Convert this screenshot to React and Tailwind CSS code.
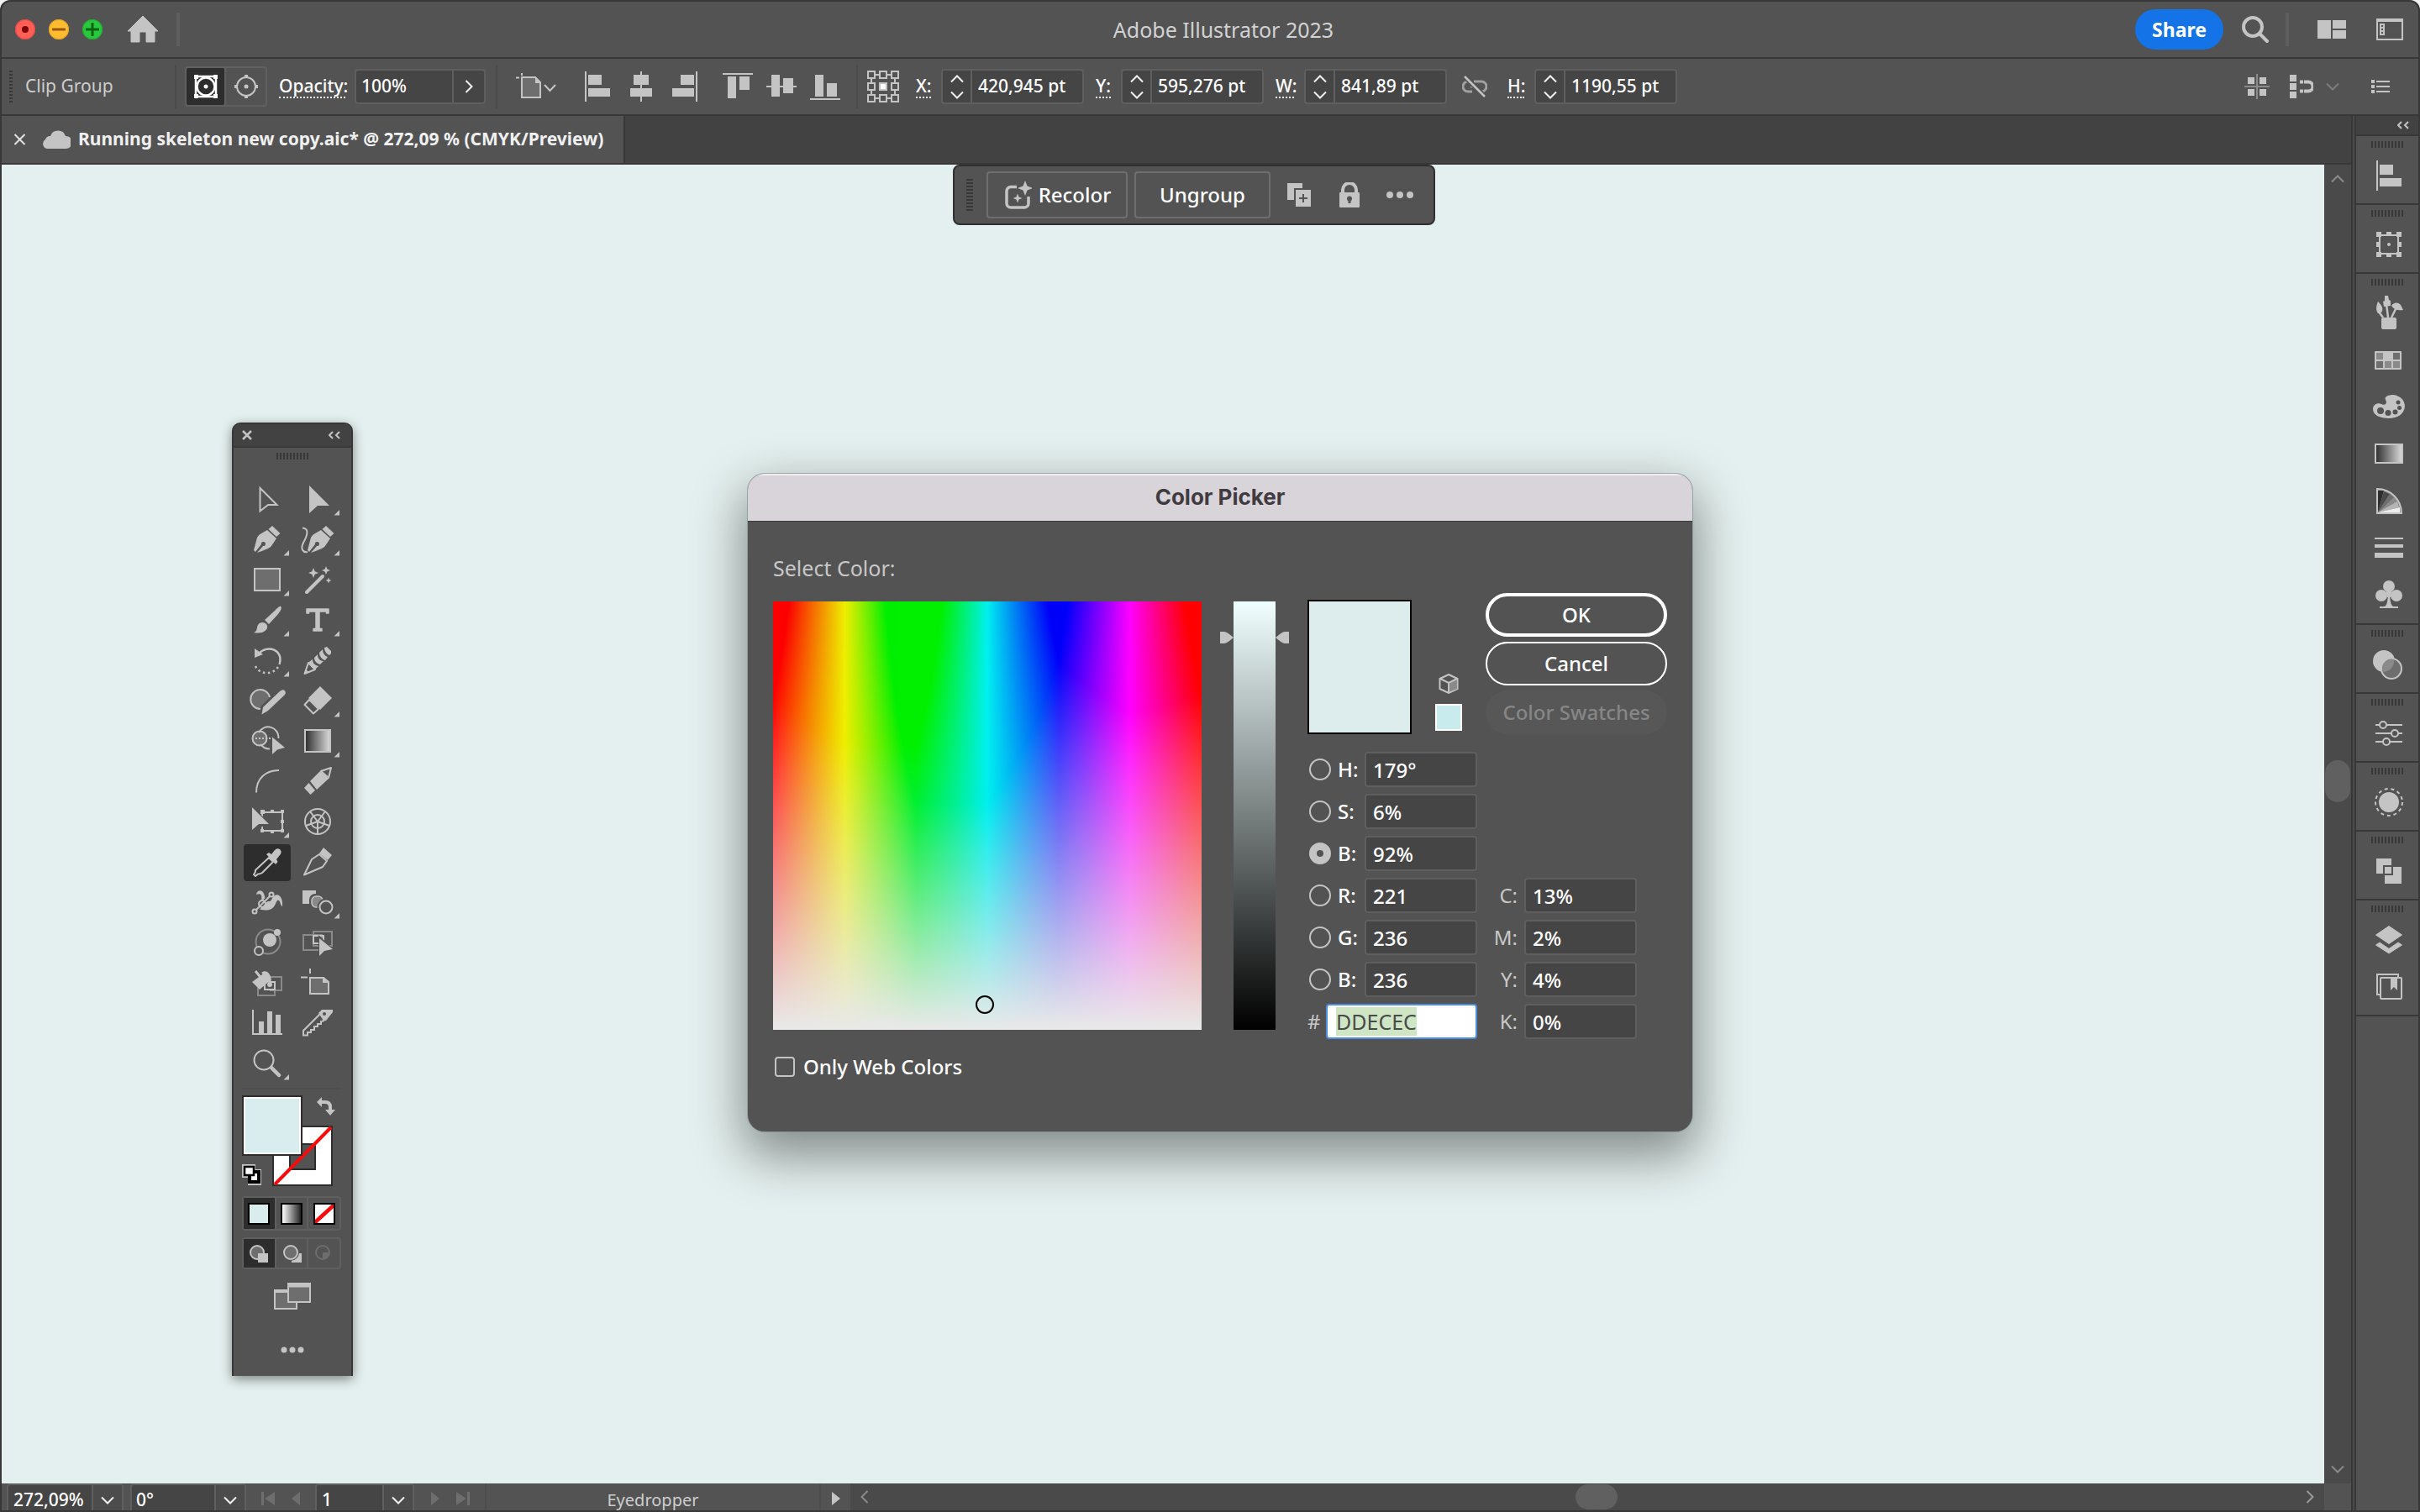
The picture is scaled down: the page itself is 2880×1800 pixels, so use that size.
import React, { useEffect, useRef } from 'react';

const C = '#c4c4c4';
const MID = '#6e6e6e';
const DIM = '#8a8a8a';

/* ---------- small helpers ---------- */

function Svg({ w, h, className = '', children }) {
  return (
    <svg
      width={w}
      height={h}
      viewBox={`${-w / 2} ${-h / 2} ${w} ${h}`}
      fill="none"
      className={`shrink-0 ${className}`}
      aria-hidden="true"
    >
      {children}
    </svg>
  );
}

function Chevron({ dir = 'down', color = '#f0f0f0', size = 6 }) {
  const s = size;
  const t = s - 2;
  const d = {
    down: `M${-s} ${-t / 2 - 1}L0 ${t / 2 + 1}L${s} ${-t / 2 - 1}`,
    up: `M${-s} ${t / 2 + 1}L0 ${-t / 2 - 1}L${s} ${t / 2 + 1}`,
    left: `M${t / 2 + 1} ${-s}L${-t / 2 - 1} 0L${t / 2 + 1} ${s}`,
    right: `M${-t / 2 - 1} ${-s}L${t / 2 + 1} 0L${-t / 2 - 1} ${s}`,
  }[dir];
  return (
    <Svg w={20} h={20}>
      <path d={d} stroke={color} strokeWidth="2" />
    </Svg>
  );
}

function Star({ x, y, r }) {
  const k = r * 0.28;
  return (
    <path
      d={`M${x} ${y - r}L${x + k} ${y - k}L${x + r} ${y}L${x + k} ${y + k}L${x} ${y + r}L${x - k} ${y + k}L${x - r} ${y}L${x - k} ${y - k}Z`}
      fill={C}
    />
  );
}

function GripH() {
  return (
    <svg width="38" height="8" className="shrink-0" aria-hidden="true">
      {[0, 4, 8, 12, 16, 20, 24, 28, 32, 36].map((x) => (
        <rect key={x} x={x} width="2" height="8" fill="#383838" />
      ))}
    </svg>
  );
}

function GripV({ w = 4 }) {
  return (
    <svg width={w} height="38" className="shrink-0" aria-hidden="true">
      {[0, 4, 8, 12, 16, 20, 24, 28, 32, 36].map((y) => (
        <rect key={y} y={y} width={w} height="2" fill="#383838" />
      ))}
    </svg>
  );
}

/* ---------- title bar ---------- */

function TitleBar() {
  return (
    <header className="grid h-[68px] shrink-0 grid-cols-[1fr_auto_1fr] items-center rounded-t-[10px] border-b-2 border-[#383838] bg-[#535353]">
      <div className="flex items-center pl-4">
        <button aria-label="Close window" className="h-6 w-6 rounded-full bg-[#ff5f57]">
          <Svg w={24} h={24}>
            <circle r="11.5" stroke="#e0443e" />
            <circle r="4" fill="#7a0000" />
          </Svg>
        </button>
        <button aria-label="Minimise window" className="ml-4 h-6 w-6 rounded-full bg-[#febc2e]">
          <Svg w={24} h={24}>
            <circle r="11.5" stroke="#dfa023" />
            <path d="M-8 0H8" stroke="#985712" strokeWidth="3" />
          </Svg>
        </button>
        <button aria-label="Zoom window" className="ml-4 h-6 w-6 rounded-full bg-[#28c840]">
          <Svg w={24} h={24}>
            <circle r="11.5" stroke="#1dad2b" />
            <path d="M-8 0H8M0 -8V8" stroke="#0b650d" strokeWidth="3" />
          </Svg>
        </button>
        <button aria-label="Home" className="ml-[30px]">
          <Svg w={36} h={32}>
            <path d="M0 -16L18 2H14V15H4V3H-4V15H-14V2H-18Z" fill={C} stroke={C} strokeLinejoin="round" />
          </Svg>
        </button>
        <div className="ml-[22px] h-10 w-1 bg-[#5e5e5e]" />
      </div>
      <h1 className="pl-8 text-[25px] leading-8 text-[#d2d2d2]">Adobe Illustrator 2023</h1>
      <div className="flex items-center justify-end pr-[18px]">
        <button className="h-12 rounded-full bg-[#1473e6] px-5 text-[23px] leading-8 font-bold text-white">Share</button>
        <button aria-label="Search" className="ml-[22px]">
          <Svg w={32} h={32}>
            <circle cx="-3" cy="-3" r="11" stroke={C} strokeWidth="4" />
            <path d="M5 5L14 14" stroke={C} strokeWidth="4" strokeLinecap="round" />
          </Svg>
        </button>
        <div className="ml-5 h-10 w-1 bg-[#5e5e5e]" />
        <button aria-label="Arrange documents" className="ml-[34px]">
          <Svg w={34} h={24}>
            <path d="M-17 -11H-1V11H-17ZM1 -11H17V-1H1ZM1 1H17V11H1Z" fill={C} />
          </Svg>
        </button>
        <button aria-label="Switch workspace" className="ml-9">
          <Svg w={32} h={26}>
            <rect x="-15" y="-12" width="30" height="24" stroke={C} strokeWidth="2" />
            <path d="M-15 -11H15" stroke={C} strokeWidth="4" />
            <rect x="-12" y="-7" width="6" height="14" fill={C} />
            <path d="M-10 -5h2v2h-2zM-10 -1h2v2h-2zM-10 3h2v2h-2z" fill="#535353" />
          </Svg>
        </button>
      </div>
    </header>
  );
}

/* ---------- control bar ---------- */

const sepCls = 'h-[52px] w-[2px] shrink-0 bg-[#4b4b4b]';
const dottedLabel =
  'shrink-0 border-b-2 border-dotted border-[#e8e8e8] text-[21px] leading-[26px] font-medium text-white';

function SpinField({ id, value }) {
  return (
    <div className="ml-3 flex h-[42px] w-[170px] shrink-0 rounded-[4px] border-2 border-[#5f5f5f] bg-[#454545]">
      <div className="flex w-[35px] shrink-0 flex-col items-center justify-center border-r-2 border-[#5f5f5f]">
        <button aria-label={`Increase ${id}`} className="h-[19px]">
          <Chevron dir="up" size={7} />
        </button>
        <button aria-label={`Decrease ${id}`} className="h-[19px]">
          <Chevron dir="down" size={7} />
        </button>
      </div>
      <input id={id} defaultValue={value} className="w-full min-w-0 bg-transparent pl-[7px] text-[21px] font-medium text-white outline-none" />
    </div>
  );
}

const ALIGN = [
  ['Align left', <path key="a" d="M-15 -18h2v36h-2zM-11 -14h16v12h-16zM-11 2h26v10h-26z" fill={C} />],
  ['Align centre', <path key="a" d="M-1 -18h2v36h-2zM-9 -14h18v12h-18zM-13 2h26v10h-26z" fill={C} />],
  ['Align right', <path key="a" d="M13 -18h2v36h-2zM-5 -14h16v12h-16zM-15 2h26v10h-26z" fill={C} />],
];
const VALIGN = [
  ['Align top', <path key="a" d="M-18 -16h36v2h-36zM-12 -12h10v26h-10zM2 -12h12v16h-12z" fill={C} />],
  ['Align middle', <path key="a" d="M-18 -1h36v2h-36zM-12 -14h10v26h-10zM2 -10h12v18h-12z" fill={C} />],
  ['Align bottom', <path key="a" d="M-18 14h36v2h-36zM-12 -14h10v26h-10zM2 -4h12v16h-12z" fill={C} />],
];

function AlignButtons({ items }) {
  return items.map(([label, art]) => (
    <button key={label} aria-label={label} className="flex w-[52px] shrink-0 justify-center">
      <Svg w={36} h={40}>{art}</Svg>
    </button>
  ));
}

function ControlBar() {
  return (
    <div className="flex h-[68px] shrink-0 items-center border-b-2 border-[#383838] bg-[#535353]">
      <div className="w-[9px] shrink-0" />
      <GripV />
      <span className="ml-[15px] w-[178px] shrink-0 text-[21px] text-[#cdcdcd]">Clip Group</span>
      <div className={sepCls} />
      <div className="ml-[10px] flex h-12 w-[98px] shrink-0 rounded-[4px] border-2 border-[#606060]">
        <button aria-label="Edit clipping path" className="flex w-[45px] items-center justify-center rounded-[2px] bg-[#2d2d2d]">
          <Svg w={32} h={32}>
            <circle r="10.5" stroke="#fff" strokeWidth="2.5" />
            <circle r="2.5" fill="#fff" />
            <rect x="-12" y="-12" width="24" height="24" stroke="#fff" strokeWidth="2.5" />
            <path d="M-14 -14h5v5h-5zM9 -14h5v5h-5zM-14 9h5v5h-5zM9 9h5v5h-5z" fill="#fff" />
          </Svg>
        </button>
        <button aria-label="Edit contents" className="flex flex-1 items-center justify-center border-l-2 border-[#606060]">
          <Svg w={32} h={32}>
            <circle r="11" stroke={C} strokeWidth="2" />
            <circle r="2.5" fill={C} />
            <path d="M-2 -14h4v4h-4zM-2 10h4v4h-4zM-14 -2h4v4h-4zM10 -2h4v4h-4z" fill={C} />
          </Svg>
        </button>
      </div>
      <label htmlFor="opacity" className={`ml-[14px] w-[79px] ${dottedLabel}`}>Opacity:</label>
      <div className="ml-[11px] flex h-[42px] w-[156px] shrink-0 rounded-[4px] border-2 border-[#5f5f5f] bg-[#454545]">
        <input id="opacity" defaultValue="100%" className="w-full min-w-0 bg-transparent pl-[6px] text-[21px] font-medium text-white outline-none" />
        <button aria-label="Opacity options" className="flex w-[38px] shrink-0 items-center justify-center border-l-2 border-[#5f5f5f]">
          <Chevron dir="right" size={7} />
        </button>
      </div>
      <div className={`ml-3 ${sepCls}`} />
      <button aria-label="Document setup" className="ml-[22px] shrink-0">
        <Svg w={48} h={32}>
          <path d="M-17 -11H-1L5 -5V13H-17Z" fill={MID} stroke={C} strokeWidth="2" />
          <path d="M-1 -12V-4H6Z" fill={C} />
          <path d="M-17 -17V-13M-24 -10.500H-20" stroke={C} strokeWidth="2" />
          <path d="M10 -2L16.500 5L23 -2" stroke={C} strokeWidth="2" />
        </Svg>
      </button>
      <div className="ml-[23px] flex shrink-0">
        <AlignButtons items={ALIGN} />
      </div>
      <div className="ml-[11px] flex shrink-0">
        <AlignButtons items={VALIGN} />
      </div>
      <div className={`ml-[11px] ${sepCls}`} />
      <button aria-label="Reference point" className="ml-[11px] shrink-0">
        <Svg w={38} h={38}>
          <path d="M-14 -14H14V14H-14Z" stroke={C} strokeWidth="2" />
          {[-14, 0, 14].map((y) =>
            [-14, 0, 14].map((x) => (
              <rect
                key={`${x},${y}`}
                x={x - 4}
                y={y - 4}
                width="8"
                height="8"
                fill={x === 0 && y === 0 ? '#fff' : '#535353'}
                stroke={C}
                strokeWidth="2"
              />
            )),
          )}
        </Svg>
      </button>
      <label htmlFor="x" className={`ml-5 w-[18px] ${dottedLabel}`}>X:</label>
      <SpinField id="x" value="420,945 pt" />
      <label htmlFor="y" className={`ml-[14px] w-[18px] ${dottedLabel}`}>Y:</label>
      <SpinField id="y" value="595,276 pt" />
      <label htmlFor="w" className={`ml-[14px] w-[22px] ${dottedLabel}`}>W:</label>
      <SpinField id="w" value="841,89 pt" />
      <button aria-label="Constrain proportions" className="ml-[18px] shrink-0">
        <Svg w={30} h={28}>
          <path
            d="M-4 -6H-8A5 5 0 0 0 -8 6H-3M-1 -6H8A5 5 0 0 1 8 6H4M-5 0H0"
            stroke="#a0a0a0"
            strokeWidth="3"
          />
          <path d="M-12 -12L12 12" stroke="#535353" strokeWidth="6" />
          <path d="M-12 -12L12 12" stroke={C} strokeWidth="2.500" />
        </Svg>
      </button>
      <label htmlFor="h" className={`ml-6 w-5 ${dottedLabel}`}>H:</label>
      <SpinField id="h" value="1190,55 pt" />
      <div className="ml-auto flex shrink-0 items-center pr-[34px]">
        <button aria-label="Align to pixel grid">
          <Svg w={30} h={30}>
            <path d="M0 -15V15M-15 0H15" stroke={DIM} strokeWidth="2" />
            <path d="M-11 -11h8v8h-8zM3 -11h8v8h-8zM-11 3h8v8h-8zM3 3h8v8h-8z" fill={C} />
          </Svg>
        </button>
        <button aria-label="Snap options" className="ml-6">
          <Svg w={28} h={30}>
            <path d="M-14 -14h8v8h-8zM-14 -4h8v8h-8zM-14 6h8v8h-8z" fill={C} />
            <path d="M3 -5.500H8A5 5 0 0 1 8 5.500H3" stroke={C} strokeWidth="4" />
            <path d="M-2 -7.500h4v4h-4zM-2 3.500h4v4h-4z" fill={C} />
          </Svg>
        </button>
        <button aria-label="More snap options" className="ml-[13px]">
          <Chevron dir="down" color="#7c7c7c" size={7} />
        </button>
        <button aria-label="Panel menu" className="ml-[36px]">
          <Svg w={22} h={18}>
            <path d="M-11 -8h4v4h-4zM-11 -2h4v4h-4zM-11 4h4v4h-4z" fill={C} />
            <path d="M-5 -6H11M-5 0H11M-5 6H11" stroke={C} strokeWidth="2" />
          </Svg>
        </button>
      </div>
    </div>
  );
}

/* ---------- document tab ---------- */

function TabBar() {
  return (
    <div className="flex h-[58px] shrink-0 border-b-2 border-[#383838] bg-[#424242]">
      <div className="flex items-center border-r-2 border-[#383838] bg-[#535353] pr-6">
        <button aria-label="Close document" className="ml-[15px]">
          <Svg w={13} h={14}>
            <path d="M-6 -6L6 6M6 -6L-6 6" stroke="#e0e0e0" strokeWidth="2" />
          </Svg>
        </button>
        <Svg w={34} h={24} className="ml-5">
          <path d="M-11 11A6 6 0 0 1 -13 0A6 6 0 0 1 -7 -4A9.500 9.500 0 0 1 11 -4A7 7 0 0 1 12 11Z" fill={C} />
        </Svg>
        <span className="ml-[9px] text-[21px] font-bold text-[#f0f0f0]">
          Running skeleton new copy.aic* @ 272,09 % (CMYK/Preview)
        </span>
      </div>
    </div>
  );
}

/* ---------- contextual task bar ---------- */

function ContextBar() {
  return (
    <div className="absolute top-0 left-[1132px] flex h-[72px] items-center rounded-[8px] border-2 border-[#2f2f2f] bg-[#535353] pr-6 pl-[14px] text-[24px] font-medium text-white">
      <GripV w={8} />
      <button className="ml-4 flex h-14 w-[168px] items-center justify-center gap-2 rounded-[4px] border-2 border-[#6e6e6e]">
        <Svg w={34} h={36}>
          <path
            d="M-1 -9.500H-8A5 5 0 0 0 -13 -4.500V10A5 5 0 0 0 -8 15H8A5 5 0 0 0 13 10V2"
            stroke={C}
            strokeWidth="3.500"
          />
          <Star x={9} y={-8} r={9} />
          <Star x={0} y={4} r={5.5} />
        </Svg>
        Recolor
      </button>
      <button className="ml-2 h-14 w-[162px] rounded-[4px] border-2 border-[#6e6e6e]">Ungroup</button>
      <button aria-label="Duplicate" className="ml-5">
        <Svg w={28} h={30}>
          <path d="M-14 -14H4V-8H-6V6H-14Z" fill={C} />
          <rect x="-4" y="-6" width="18" height="20" fill={C} />
          <path d="M5 -1V9M0 4H10" stroke="#535353" strokeWidth="2" />
        </Svg>
      </button>
      <button aria-label="Lock" className="ml-[34px]">
        <Svg w={24} h={30}>
          <path d="M-8 -2V-6A8 8 0 0 1 8 -6V-2" stroke={C} strokeWidth="4" />
          <rect x="-12" y="-3" width="24" height="18" rx="1" fill={C} />
          <path d="M0 5V10" stroke="#535353" strokeWidth="3" />
          <circle cy="4.500" r="3" fill="#535353" />
        </Svg>
      </button>
      <button aria-label="More options" className="ml-8">
        <Svg w={32} h={10}>
          <circle cx="-12" r="4" fill={C} />
          <circle r="4" fill={C} />
          <circle cx="12" r="4" fill={C} />
        </Svg>
      </button>
    </div>
  );
}

/* ---------- tools panel ---------- */

const penNib = (dx) => (
  <g transform={`translate(${dx} 0)`} fill={C}>
    <path d="M-16 12L-12 -3Q-11 -6 -7 -8L0 -12L11 -2L7 4Q5 8 1 10Q-6 13 -12 15L-5 7A2.500 2.500 0 1 0 -7 5L-14 14Z" />
    <path d="M6 -17L15.500 -8L11 -4L1.500 -13Z" />
  </g>
);

const TOOLS = [
  ['Direct selection', 0, <path d="M-8.500 -14V13.500L1 6H11.500Z" stroke={C} strokeWidth="2" />],
  ['Selection', 1, <path d="M-10 -17V16L0 7H14Z" fill={C} />],
  ['Pen', 1, penNib(0)],
  [
    'Curvature',
    1,
    <>
      {penNib(4)}
      <path d="M-18 -14.500C-9 -14 -13 -4 -17 3C-21 11 -17 15 -12 14" stroke={C} strokeWidth="2" />
    </>,
  ],
  ['Rectangle', 1, <rect x="-15" y="-14" width="30" height="26" fill={MID} stroke={C} strokeWidth="2" />],
  [
    'Magic wand',
    0,
    <>
      <path d="M-13 14L6 -5" stroke={C} strokeWidth="4" strokeLinecap="round" />
      <Star x={-5} y={-9} r={6} />
      <Star x={10} y={-12} r={5} />
      <Star x={13} y={0} r={3.5} />
    </>,
  ],
  [
    'Paintbrush',
    1,
    <g fill={C}>
      <path d="M16 -17C18 -15 16 -12 13 -8L2 4L-3 -1L9 -12C12 -15 15 -18 16 -17Z" />
      <path d="M-16 14C-11 12 -13 8 -11 5C-8 0 -1 2 0 6C1 12 -6 16 -16 14Z" />
    </g>,
  ],
  [
    'Type',
    1,
    <path
      d="M-13 -14H13V-9H10.500V-11H2V9.500H5V12H-5V9.500H-2V-11H-10.500V-9H-13Z"
      fill={C}
      stroke={C}
      strokeWidth="1.500"
      strokeLinejoin="round"
    />,
  ],
  [
    'Rotate',
    1,
    <>
      <path d="M-10 -9C0 -20 20 -14 14.500 4" stroke={C} strokeWidth="2.500" />
      <path d="M-15 -15L-15 -4L-5 -8Z" fill={C} />
      <path d="M-14 6C-10 16 8 18 14 5" stroke={C} strokeWidth="2.500" strokeDasharray="2.500 3.500" />
    </>,
  ],
  [
    'Crayon',
    0,
    <>
      <path d="M-15.500 15L-11 2L-3 10Z" stroke={C} strokeWidth="2" strokeLinejoin="round" />
      <path d="M-16 15L-13.500 10L-11 13Z" fill={C} />
      <path d="M-10 1C-8 -1 -6 -2 -6 -2C-6 3 -3 5 1 6L-3 10C-7 8 -10 5 -10 1ZM-4 -4L0 -8C0 -3 3 0 7 0L3 4C-1 3 -4 0 -4 -4ZM2 -10L6 -14C6 -9 9 -6 12 -5L9 -1C5 -2 2 -6 2 -10ZM8 -16L11 -17L16 -12V-9L14 -7C11 -8 8 -12 8 -16Z" fill={C} />
    </>,
  ],
  [
    'Blob brush',
    0,
    <>
      <path d="M3 -5A11.500 11.500 0 1 0 -8 9" fill={MID} stroke={C} strokeWidth="2" />
      <path d="M-6 15L-4 7L14 -10" stroke="#535353" strokeWidth="7" />
      <path d="M-6.500 15.500L-5 7L15 -12Q19 -15 21 -12.500Q23 -10 20 -7L1 11Z" fill={C} />
    </>,
  ],
  [
    'Eraser',
    1,
    <>
      <path d="M3 -18L17 -4L3 10L-11 -4Z" fill={C} />
      <path d="M-10 -2L1 9L-5 14.500L-15.500 4Z" stroke={C} strokeWidth="2" strokeLinejoin="round" />
    </>,
  ],
  [
    'Shape builder',
    0,
    <>
      <circle cx="-9" cy="-4" r="8.500" fill={MID} stroke={C} strokeWidth="2" />
      <path d="M-10 -11A12.500 12.500 0 0 1 13.500 -4M-8 3Q-3 9 3 8.500" stroke={C} strokeWidth="2" />
      <path d="M-14 -4H6" stroke={C} strokeWidth="2" strokeDasharray="2 2" />
      <path d="M6 -5.500V15L12 9.500L21 7Z" fill={C} />
    </>,
  ],
  [
    'Gradient',
    1,
    <rect x="-15" y="-14" width="30" height="26" fill="url(#toolGradient)" stroke={C} strokeWidth="2" />,
  ],
  ['Arc', 0, <path d="M-13 12.500C-13 -4 -2 -14 14 -14" stroke={C} strokeWidth="2" />],
  [
    'Pencil',
    0,
    <>
      <path d="M16 -17L13 -5L4 -13Z" stroke={C} strokeWidth="2" strokeLinejoin="round" />
      <path d="M3 -13L13 -4L-1 9L-9 -1Z" fill={C} />
      <path d="M-10.500 1L-3 10L-8.500 15L-16 7Z" fill={C} />
    </>,
  ],
  [
    'Free transform',
    1,
    <>
      <rect x="-6" y="-12" width="24" height="22" stroke={C} strokeWidth="2" />
      <path d="M-8 -15h5v5h-5zM4 -15h4v4h-4zM16 -15h4v4h-4zM16 -3h4v4h-4zM16 8h4v4h-4zM4 9h4v4h-4zM-8 8h4v4h-4z" fill={C} />
      <path d="M-19 -20V11L3 1Z" fill="#535353" />
      <path d="M-18 -18V9L-10 2H2Z" fill={C} />
    </>,
  ],
  [
    'Polar grid',
    0,
    <g stroke={C} strokeWidth="2">
      <circle cy="-1" r="15" />
      <circle cy="-1" r="8" />
      <path d="M0 -1V14M0 -1L14 4M0 -1L-14 4M0 -1L9 -13M0 -1L-9 -13" />
    </g>,
  ],
  [
    'Eyedropper',
    0,
    <>
      <path d="M2 -6L7 -1L-6 12Q-9 14 -11 13.500L-14 16L-16 14L-14 11Q-15 9 -12 7Z" stroke={C} strokeWidth="2" strokeLinejoin="round" />
      <path d="M-1 -10L2 -12L5 -10L9 -15Q12 -18 15.500 -15.500Q18 -12 15 -9L11 -4L12.500 -1L10 2Z" fill={C} />
    </>,
  ],
  [
    'Knife',
    0,
    <>
      <path d="M-16 14.500L-7 -4L2 -10L11 -2L6 5Z" stroke={C} strokeWidth="2" strokeLinejoin="round" />
      <path d="M7 -18L17 -9L12 -3L2 -11Z" fill={C} />
    </>,
  ],
  [
    'Puppet warp',
    0,
    <>
      <path
        d="M-13 -10C-12 -16 -6 -16 -4 -11C-2 -6 -3 -3 1 -2C6 -1 5 -7 9 -9C14 -12 19 -6 18 4C15 3 16 -5 12 -3C10 -1 10 4 5 7C-1 10 -9 8 -12 6C-7 2 -6 -4 -7 -9C-8 -11 -10 -11 -13 -10Z"
        fill={C}
      />
      <path d="M-15 10L5 -10" stroke="#535353" strokeWidth="5" />
      <path d="M-15 10L5 -10" stroke={C} strokeWidth="2" />
      <circle cx="-15" cy="10" r="2.500" fill="#535353" stroke={C} strokeWidth="2" />
      <circle cx="5" cy="-10" r="2.500" fill="#535353" stroke={C} strokeWidth="2" />
      <circle cx="-6" cy="1" r="4" stroke={C} strokeWidth="2" />
    </>,
  ],
  [
    'Blend',
    1,
    <>
      <rect x="-18" y="-15" width="16" height="16" fill={C} />
      <rect x="-8" y="-9" width="14" height="15" rx="5" fill={MID} stroke="#535353" strokeWidth="4" />
      <rect x="-7" y="-8" width="13" height="13" rx="5" fill={DIM} stroke={C} strokeWidth="1.500" />
      <circle cx="10" cy="5" r="9" fill="#535353" stroke="#535353" strokeWidth="3" />
      <circle cx="10" cy="5" r="7.500" fill="#535353" stroke={C} strokeWidth="2" />
    </>,
  ],
  [
    'Symbol sprayer',
    0,
    <>
      <circle cx="1" cy="-2" r="14.500" stroke={DIM} strokeWidth="2" />
      <circle cx="12" cy="-13" r="4" fill={C} />
      <circle cx="3" cy="-4" r="8" fill={C} />
      <circle cx="-10" cy="9" r="5" fill="#535353" stroke={C} strokeWidth="2" />
    </>,
  ],
  [
    'Live paint selection',
    0,
    <>
      <path d="M-17 -10H5V8H-17ZM-5 -14H17V3H-5Z" stroke={DIM} strokeWidth="2" />
      <path d="M-5 -9H7V0H-5Z" stroke={C} strokeWidth="2" />
      <path d="M1 -10V17L9 10L20 8Z" fill="#535353" />
      <path d="M2 -6V15L8 9L18 7Z" fill={C} />
    </>,
  ],
  [
    'Live paint bucket',
    0,
    <>
      <path d="M3 -8H17V8H3M-11 4V14H9V8" stroke={DIM} strokeWidth="2" />
      <path d="M-18 -2L-3 -13L2 -9L5 -5L-9 7Z" fill={C} />
      <path d="M-14 -15L-5 -4M-6 -12Q0 -16 3 -7V2" stroke={C} strokeWidth="3" />
      <path d="M-3 -1V7H9V-2H4" stroke={C} strokeWidth="2" />
      <circle cx="3" cy="1" r="3" fill={C} />
    </>,
  ],
  [
    'Artboard',
    0,
    <>
      <path d="M-9 -7H7L13 -2V12H-9Z" fill={MID} stroke={C} strokeWidth="2" />
      <path d="M6 -8V-1H14Z" fill={C} />
      <path d="M-20 -7.500H-12M-9 -18V-12" stroke={C} strokeWidth="2" />
    </>,
  ],
  [
    'Column graph',
    0,
    <path d="M-18 -17h2v28h34v2h-36zM-10 -3h6v14h-6zM0 -15h6v26h-6zM10 -11h6v22h-6z" fill={C} />,
  ],
  [
    'Slice',
    0,
    <>
      <path d="M3 -12L-17 8V13.500H-12V10L-8 10V7L-4 7V3L0 3V0L4 0V-3L8 -4" stroke={C} strokeWidth="2" />
      <path d="M1 -13L5 -17H18V-14L10 -4L7 -4Z" fill={C} />
      <circle cx="8" cy="-12" r="2" fill="#535353" />
    </>,
  ],
  [
    'Zoom',
    1,
    <>
      <circle cx="-4" cy="-5" r="11.500" stroke={C} strokeWidth="2" />
      <path d="M5 4L14 13" stroke={C} strokeWidth="4.500" strokeLinecap="round" />
    </>,
  ],
];

const ring = (bg, sq, stroke, fill) => (
  <>
    <circle cx="-2" cy="-1" r="8" fill={fill} stroke={stroke} strokeWidth="2" />
    {bg ? <rect x="-1" y="0" width="12" height="11" fill={sq} /> : <path d="M-2 -1H6A8 8 0 0 1 -2 7Z" fill={sq} />}
  </>
);

function ToolsPanel() {
  return (
    <aside
      aria-label="Tools"
      className="absolute top-[307px] left-[274px] flex w-[144px] flex-col rounded-t-[10px] border-2 border-b-0 border-[#383838] bg-[#535353] shadow-[0_4px_14px_rgba(0,0,0,0.45)]"
    >
      <div className="flex h-7 w-full shrink-0 items-center justify-between rounded-t-[8px] border-b-2 border-[#383838] bg-[#424242] pr-[13px] pl-[10px]">
        <button aria-label="Close tools">
          <Svg w={12} h={14}>
            <path d="M-5 -5L5 5M5 -5L-5 5" stroke={C} strokeWidth="2.500" />
          </Svg>
        </button>
        <button aria-label="Collapse tools">
          <Svg w={14} h={12}>
            <path d="M-2 -4L-6 0L-2 4M6 -4L2 0L6 4" stroke={C} strokeWidth="2" />
          </Svg>
        </button>
      </div>
      <div className="mt-[6px] self-center">
        <GripH />
      </div>
      <div className="mt-6 grid grid-cols-[60px_60px] self-center">
        {TOOLS.map(([label, more, art]) => (
          <button
            key={label}
            aria-label={label}
            className={`relative flex h-12 w-[60px] items-center justify-center ${
              label === 'Eyedropper' ? 'rounded-[6px] border-x-2 border-y-2 border-[#535353] bg-[#2d2d2d]' : ''
            }`}
          >
            <Svg w={label === 'Eyedropper' ? 56 : 60} h={label === 'Eyedropper' ? 44 : 48}>
              {art}
              {more ? <path d="M26 12V18.500H19.500Z" fill={C} /> : null}
            </Svg>
          </button>
        ))}
      </div>
      <div className="mt-1 ml-[10px] h-[2px] w-[118px] bg-[#4e4e4e]" />
      <button aria-label="Fill and stroke" className="mt-[7px] ml-[10px] w-fit">
        <svg width="124" height="110" viewBox="0 0 124 110" aria-hidden="true">
          <rect x="37" y="37" width="70" height="70" fill="#fff" stroke="#2d2d2d" strokeWidth="2" />
          <rect x="57" y="58" width="30" height="30" fill="#535353" stroke="#2d2d2d" strokeWidth="2" />
          <path d="M39 106L106 38" stroke="#f50c0c" strokeWidth="4" />
          <rect x="1" y="1" width="70" height="70" fill="#fff" stroke="#2d2d2d" strokeWidth="2" />
          <rect x="4" y="4" width="64" height="64" fill="#d9edee" />
          <path d="M93 8H99Q105 8 105 14V18" stroke={C} strokeWidth="4" fill="none" />
          <path d="M95 2V14L89 8ZM99 17H111L105 24Z" fill={C} />
          <path d="M0 82H16V88H23V107H7V98H0Z" fill={C} />
          <rect x="9" y="91" width="11" height="12" fill="#fff" stroke="#000" strokeWidth="4" />
          <rect x="3" y="85" width="11" height="10" fill="#fff" stroke="#000" strokeWidth="2.500" />
        </svg>
      </button>
      <div className="mt-[10px] ml-[10px] flex h-[41px] w-[118px] rounded-[4px] border-2 border-[#5f5f5f]">
        <button aria-label="Color" className="flex flex-1 items-center justify-center bg-[#2d2d2d]">
          <span className="h-[26px] w-[26px] border-2 border-black bg-[#d9edee]" />
        </button>
        <button aria-label="Gradient fill" className="flex flex-1 items-center justify-center border-l-2 border-[#5f5f5f]">
          <span className="h-[26px] w-[26px] border-2 border-black bg-[linear-gradient(to_right,#fff,#222)]" />
        </button>
        <button aria-label="None" className="flex flex-1 items-center justify-center border-l-2 border-[#5f5f5f]">
          <Svg w={26} h={26}>
            <rect x="-12" y="-12" width="24" height="24" fill="#fff" />
            <path d="M-12 11L12 -11" stroke="#f50c0c" strokeWidth="4.500" />
            <rect x="-12" y="-12" width="24" height="24" stroke="#000" strokeWidth="2" />
          </Svg>
        </button>
      </div>
      <div className="mt-2 ml-[10px] flex h-[38px] w-[118px] rounded-[4px] border-2 border-[#5f5f5f]">
        <button aria-label="Draw normal" className="flex flex-1 items-center justify-center bg-[#2d2d2d]">
          <Svg w={26} h={24}>{ring(true, C, C, MID)}</Svg>
        </button>
        <button aria-label="Draw behind" className="flex flex-1 items-center justify-center border-l-2 border-[#5f5f5f]">
          <Svg w={26} h={24}>
            <rect x="0" y="0" width="12" height="11" fill={C} />
            <circle cx="-1" cy="-1" r="10" fill="#535353" />
            <circle cx="-1" cy="-1" r="8" fill={MID} stroke={C} strokeWidth="2" />
          </Svg>
        </button>
        <button aria-label="Draw inside" className="flex flex-1 items-center justify-center border-l-2 border-[#5f5f5f]">
          <Svg w={26} h={24}>{ring(false, MID, MID, '#535353')}</Svg>
        </button>
      </div>
      <button aria-label="Change screen mode" className="mt-4 self-center">
        <Svg w={44} h={32}>
          <rect x="-21" y="-7" width="26" height="22" fill={MID} stroke={C} strokeWidth="2" />
          <path d="M-21 -6H5" stroke={C} strokeWidth="4" />
          <rect x="-5" y="-15" width="26" height="22" fill={MID} stroke={C} strokeWidth="2" />
          <path d="M-5 -13H21" stroke={C} strokeWidth="5" />
        </Svg>
      </button>
      <button aria-label="Edit toolbar" className="mt-[43px] mb-[26px] self-center">
        <Svg w={32} h={10}>
          <circle cx="-10" r="3.500" fill={C} />
          <circle r="3.500" fill={C} />
          <circle cx="10" r="3.500" fill={C} />
        </Svg>
      </button>
    </aside>
  );
}

/* ---------- color picker ---------- */

const HUE_STOPS = {
  r: [1.28, 1.6, 1.89, 1.89, 1.15, 1.15, 1.28],
  g: [1.28, 1.28, 1.28, 1.28, 1.16, 1.35, 1.28],
  b: [1.28, 1.49, 1.5, 1.7, 1.3, 1.3, 1.28],
  v: [255, 238, 240, 240, 250, 255, 255],
};

function lerpStops(stops, h) {
  const i = Math.min(5, Math.floor(h));
  return stops[i] + (stops[i + 1] - stops[i]) * (h - i);
}

function pureHue(h) {
  const f = (n) => {
    const k = (n + h) % 6;
    return 1 - Math.max(0, Math.min(k, 4 - k, 1));
  };
  return [f(5), f(3), f(1)];
}

function Spectrum() {
  const ref = useRef(null);
  useEffect(() => {
    const size = 510;
    const ctx = ref.current.getContext('2d');
    const img = ctx.createImageData(size, size);
    for (let x = 0; x < size; x++) {
      const h = (x / (size - 1)) * 6;
      const pure = pureHue(h);
      const gains = [lerpStops(HUE_STOPS.r, h), lerpStops(HUE_STOPS.g, h), lerpStops(HUE_STOPS.b, h)];
      const top = lerpStops(HUE_STOPS.v, h);
      for (let y = 0; y < size; y++) {
        const s = 1 - y / (size - 1);
        const v = 233 + (top - 233) * Math.min(1, s * 1.6);
        const o = (y * size + x) * 4;
        for (let c = 0; c < 3; c++) {
          img.data[o + c] = v * Math.max(0, 1 - gains[c] * s * (1 - pure[c]));
        }
        img.data[o + 3] = 255;
      }
    }
    ctx.putImageData(img, 0, 0);
  }, []);
  return (
    <div className="relative mt-6 h-[510px] w-[510px]">
      <canvas ref={ref} width="510" height="510" className="block" />
      <div className="absolute top-[469px] left-[241px] h-[22px] w-[22px] rounded-full border-2 border-black" />
    </div>
  );
}

const fieldCls =
  'h-[42px] w-[134px] rounded-[4px] border-2 border-[#5f5f5f] bg-[#454545] pl-2 text-[24px] font-medium text-white outline-none';

const MODES = [
  ['hue', 'H:', '179°'],
  ['saturation', 'S:', '6%'],
  ['brightness', 'B:', '92%'],
  ['red', 'R:', '221'],
  ['green', 'G:', '236'],
  ['blue', 'B:', '236'],
];
const CMYK = [
  ['cyan', 'C:', '13%'],
  ['magenta', 'M:', '2%'],
  ['yellow', 'Y:', '4%'],
  ['black', 'K:', '0%'],
];

function ColorPicker() {
  const hex = useRef(null);
  useEffect(() => {
    hex.current.focus();
    hex.current.select();
  }, []);
  return (
    <section
      role="dialog"
      aria-labelledby="picker-title"
      className="absolute top-[368px] left-[888px] w-[1124px] overflow-hidden rounded-[20px] bg-[#535353] text-[24px] leading-8 shadow-[0_0_0_1px_rgba(120,140,140,0.6),0_24px_60px_6px_rgba(0,0,0,0.42)]"
    >
      <h2
        id="picker-title"
        className="flex h-[57px] items-center justify-center border-b border-[#3c3c3c] bg-[#d9d4da] font-[Inter] text-[26px] font-bold text-[#3f3b40] shadow-[inset_0_2px_0_rgba(255,255,255,0.6)]"
      >
        Color Picker
      </h2>
      <div className="flex px-[30px] pt-[39px] pb-[61px]">
        <div>
          <p className="text-[25px] text-[#c8c8c8]">Select Color:</p>
          <Spectrum />
          <label className="mt-7 flex items-center font-medium text-white">
            <input type="checkbox" className="ml-[2px] h-6 w-6 appearance-none rounded-[4px] border-2 border-[#c4c4c4]" />
            <span className="ml-[10px]">Only Web Colors</span>
          </label>
        </div>
        <div className="mt-14 ml-[22px] flex">
          <Svg w={16} h={86}>
            <path d="M-8 -7H-3Q0 -7 8 0Q0 7 -3 7H-8Z" fill={C} />
          </Svg>
          <div className="h-[510px] w-[50px] bg-[linear-gradient(#f0ffff,#000)]" />
          <Svg w={16} h={86}>
            <path d="M8 -7H3Q0 -7 -8 0Q0 7 3 7H8Z" fill={C} />
          </Svg>
        </div>
        <div className="mt-[46px] ml-[22px]">
          <div className="flex items-end">
            <div className="h-40 w-[124px] border-2 border-black bg-[#ddecec]" />
            <div className="mb-1 ml-7 flex flex-col items-center gap-3">
              <button aria-label="Out of web color warning">
                <Svg w={24} h={24}>
                  <path d="M0 -11L10.500 -6V6L0 11L-10.500 6V-6Z" stroke={C} strokeWidth="2" />
                  <path d="M0 0L10 -6V6L0 10Z" fill={DIM} />
                  <path d="M-10 -6L0 -1L10 -6M0 -1V11" stroke={C} strokeWidth="2" />
                </Svg>
              </button>
              <button aria-label="Use web safe color" className="h-8 w-8 border-2 border-white bg-[#c8ebee]" />
            </div>
            <div className="ml-7 flex w-[216px] flex-col gap-[6px] font-medium">
              <button className="h-[52px] rounded-full border-4 border-white text-white">OK</button>
              <button className="h-[52px] rounded-full border-2 border-white text-white">Cancel</button>
              <button disabled className="h-[52px] rounded-full bg-[#575757] text-[#868686]">Color Swatches</button>
            </div>
          </div>
          <div className="mt-[21px] flex items-end">
            <div className="flex w-[202px] flex-col gap-2">
              {MODES.map(([id, label, value]) => (
                <div key={id} className="flex items-center">
                  <label className="flex w-[68px] items-center font-medium text-white">
                    <input
                      type="radio"
                      name="mode"
                      defaultChecked={id === 'brightness'}
                      className="ml-[2px] h-[26px] w-[26px] appearance-none rounded-full border-2 border-[#c4c4c4] checked:border-[9px]"
                    />
                    <span className="ml-2">{label}</span>
                  </label>
                  <input aria-label={id} defaultValue={value} className={fieldCls} />
                </div>
              ))}
              <div className="flex items-center">
                <label htmlFor="hex" className="w-[22px] text-[#c8c8c8]">#</label>
                <input
                  id="hex"
                  ref={hex}
                  defaultValue="DDECEC"
                  className="h-[42px] w-[180px] rounded-[4px] border-2 border-[#4a90e2] bg-white pl-[10px] text-[25px] text-[#4a4a4a] outline-none selection:bg-[#cfe6c5] selection:text-[#4a4a4a]"
                />
              </div>
            </div>
            <div className="flex flex-col gap-2">
              {CMYK.map(([id, label, value]) => (
                <div key={id} className="flex items-center">
                  <label htmlFor={id} className="w-12 text-right text-[#c8c8c8]">{label}</label>
                  <input id={id} defaultValue={value} className={`ml-2 ${fieldCls}`} />
                </div>
              ))}
            </div>
          </div>
        </div>
      </div>
    </section>
  );
}

/* ---------- status bar ---------- */

function StatusSelect({ label, value, cls, arrowCls, padCls }) {
  return (
    <div className={`relative h-10 shrink-0 rounded-[4px] border-2 border-[#5f5f5f] bg-[#454545] ${cls}`}>
      <select aria-label={label} className={`h-full w-full appearance-none bg-transparent text-[21px] font-medium text-white outline-none ${padCls}`}>
        <option>{value}</option>
      </select>
      <span className={`pointer-events-none absolute inset-y-0 right-0 flex items-center justify-center border-l-2 border-[#5f5f5f] bg-[#4c4c4c] ${arrowCls}`}>
        <Chevron dir="down" size={7} />
      </span>
    </div>
  );
}

function StatusBar() {
  return (
    <footer className="flex h-8 shrink-0 items-start overflow-hidden bg-[#535353]">
      <StatusSelect label="Zoom level" value="272,09%" cls="ml-[6px] w-[139px]" arrowCls="w-9" padCls="pl-[6px]" />
      <StatusSelect label="Rotation" value="0°" cls="ml-2 w-[138px]" arrowCls="w-9" padCls="pl-[5px]" />
      <div className="flex h-9 items-center">
        <button aria-label="First artboard" className="ml-[18px]">
          <Svg w={16} h={18}>
            <path d="M-8 -8h3v16h-3zM8 -8V8L-4 0Z" fill={MID} />
          </Svg>
        </button>
        <button aria-label="Previous artboard" className="ml-5">
          <Svg w={10} h={18}>
            <path d="M5 -8V8L-5 0Z" fill={MID} />
          </Svg>
        </button>
      </div>
      <StatusSelect label="Artboard" value="1" cls="ml-[18px] w-[118px]" arrowCls="w-9" padCls="pl-[6px]" />
      <div className="flex h-9 items-center">
        <button aria-label="Next artboard" className="ml-5">
          <Svg w={10} h={18}>
            <path d="M-5 -8V8L5 0Z" fill={MID} />
          </Svg>
        </button>
        <button aria-label="Last artboard" className="ml-5">
          <Svg w={16} h={18}>
            <path d="M5 -8h3v16h-3zM-8 -8V8L4 0Z" fill={MID} />
          </Svg>
        </button>
      </div>
      <div className="ml-[18px] flex h-10 w-[400px] shrink-0 items-center justify-center border-x-2 border-[#4d4d4d] text-[20px] text-[#cdcdcd]">
        Eyedropper
      </div>
      <div className="flex h-9 items-center">
        <button aria-label="Status options" className="ml-[13px]">
          <Svg w={10} h={18}>
            <path d="M-5 -8V8L5 0Z" fill={C} />
          </Svg>
        </button>
      </div>
      <div className="ml-3 flex h-full flex-1 items-center bg-[#4a4a4a]">
        <button aria-label="Scroll left" className="ml-[7px]">
          <Chevron dir="left" color={DIM} size={7} />
        </button>
        <div className="flex flex-1 items-center">
          <div className="w-[49.2%]" />
          <div className="h-[30px] w-[50px] rounded-full bg-[#606060]" />
        </div>
        <button aria-label="Scroll right" className="mr-[7px]">
          <Chevron dir="right" color="#9a9a9a" size={7} />
        </button>
      </div>
      <div className="w-8 shrink-0" />
    </footer>
  );
}

/* ---------- right dock ---------- */

const DOCK = [
  [['Align', <path key="a" d="M-13 -17h2v36h-2zM-9 -12h16v12h-16zM-9 4h26v10h-26z" fill={C} />]],
  [
    [
      'Transform',
      <g key="a">
        <rect x="-9" y="-10" width="22" height="22" stroke={C} strokeWidth="2" />
        <path d="M-13 -14h6v6h-6zM-1 -14h6v5h-6zM11 -14h6v6h-6zM-13 -2h5v6h-5zM12 -2h5v6h-5zM-13 10h6v6h-6zM-1 11h6v5h-6zM11 10h6v6h-6z" fill={C} />
        <circle cx="2" cy="1" r="2" fill={C} />
      </g>,
    ],
  ],
  [
    [
      'Brushes',
      <g key="a" fill={C}>
        <rect x="-7" y="6" width="18" height="14" rx="2" />
        <path d="M-5 6L-11 -2M1 6L-1 -10M5 6L11 -6" stroke={C} strokeWidth="2.500" />
        <path d="M-11 -13C-6 -8 -4 -4 -7 0L-11 1C-14 -3 -13 -8 -11 -13ZM-3 -20L1 -20L2 -15L4 -14L4 -8L-4 -7L-5 -13L-3 -14ZM5 -8C7 -12 13 -13 16 -9L19 -3C15 -2 8 -3 5 -8Z" />
      </g>,
    ],
    [
      'Swatches',
      <g key="a">
        <rect x="-15" y="-10" width="32" height="22" rx="1" fill={C} />
        <path d="M-13 -8h8v8h-8z" fill={DIM} />
        <path d="M7 -8h8v8h-8zM-13 2h8v8h-8z" fill={MID} />
        <path d="M-3 2h8v8h-8zM7 2h8v8h-8z" fill={DIM} />
      </g>,
    ],
    [
      'Color',
      <g key="a">
        <path
          d="M-2 -8C-4 -12 2 -14 7 -14C16 -13 21 -7 21 0C20 9 12 14 2 14C-9 14 -17 10 -17 3C-17 -3 -11 -5 -7 -3C-4 -1 1 -3 -2 -8Z"
          fill={C}
        />
        <g fill="#535353">
          <circle cx="-8" cy="5" r="4" />
          <circle cx="1" cy="7.500" r="3.500" />
          <circle cx="9.500" cy="6.500" r="3" />
          <circle cx="14.500" cy="1.500" r="2.500" />
          <circle cx="13" cy="-5" r="2.500" />
        </g>
      </g>,
    ],
    ['Gradient', <rect key="a" x="-14" y="-11" width="32" height="22" fill="url(#toolGradient)" stroke={C} strokeWidth="2" />],
    [
      'Color guide',
      <g key="a">
        <path d="M-12 -14A29 29 0 0 1 17 15H-12Z" fill={DIM} stroke={C} strokeWidth="2" />
        <path d="M-11 14V-12L-4 -12Z" fill="#2d2d2d" />
        <path d="M-11 14L-4 -11L3 -8Z" fill="#4a4a4a" />
        <path d="M-11 14L3 -8L8 -4Z" fill={MID} />
        <path d="M-11 14L12 1L14 8Z" fill="#b5b5b5" />
        <path d="M-11 14L15 8V14Z" fill="#ececec" />
      </g>,
    ],
    ['Stroke', <path key="a" d="M-15 -12h34v2h-34zM-15 -4h34v4h-34zM-15 6h34v6h-34z" fill={C} />],
    [
      'Symbols',
      <g key="a" fill={C}>
        <circle cx="2" cy="-10" r="7" />
        <circle cx="-7" cy="1" r="7" />
        <circle cx="11" cy="1" r="7" />
        <path d="M1 -4H3Q3 14 8 14H13V16H-9V14H-4Q1 14 1 -4Z" />
        <path d="M-2 -6L6 -6L4 3H0Z" />
      </g>,
    ],
  ],
  [
    [
      'Transparency',
      <g key="a">
        <circle cx="-4" cy="-3" r="13" fill={C} />
        <circle cx="5" cy="6" r="12" fill={MID} stroke={C} strokeWidth="2" />
        <path d="M-6 6A11 11 0 0 1 8 -5A13 13 0 0 1 -5 10Z" fill={DIM} />
      </g>,
    ],
  ],
  [
    [
      'Properties',
      <g key="a" stroke={C} strokeWidth="2">
        <path d="M-14 -9H18M-14 1H18M-14 11H18" />
        <circle cx="-5" cy="-9" r="4" fill="#535353" />
        <circle cx="9" cy="1" r="4" fill="#535353" />
        <circle cx="-1" cy="11" r="4" fill="#535353" />
      </g>,
    ],
  ],
  [
    [
      'Appearance',
      <g key="a">
        <circle cx="2" cy="1" r="12" fill={C} />
        <circle cx="2" cy="1" r="16" stroke={C} strokeWidth="2" strokeDasharray="4 3.730" />
      </g>,
    ],
  ],
  [
    [
      'Pathfinder',
      <g key="a">
        <path d="M-13 -14H5V-6H-5V4H-13ZM-3 6H7V-4H17V16H-3Z" fill={C} />
        <path d="M-3 -4h8v8h-8z" fill={C} />
      </g>,
    ],
  ],
  [
    [
      'Layers',
      <g key="a" fill={C} stroke={C} strokeLinejoin="round">
        <path d="M2 -15.500L17.500 -5L2 5.500L-13.500 -5Z" />
        <path d="M-13.500 7L-9 4L2 11.500L13 4L17.500 7L2 17Z" />
      </g>,
    ],
    [
      'Libraries',
      <g key="a">
        <path d="M-9 10H-12V-14H13V-10" stroke={C} strokeWidth="2" />
        <rect x="-8" y="-10" width="25" height="25" rx="1" stroke={C} strokeWidth="2" />
        <path d="M4 -10H12V5L8 1L4 5Z" fill={C} />
      </g>,
    ],
  ],
];

function Dock() {
  return (
    <aside aria-label="Panels" className="flex w-20 shrink-0 flex-col border-l-2 border-[#383838] bg-[#383838]">
      <div className="flex h-full border-l-2 border-[#4a4a4a]">
        <div className="flex flex-1 flex-col border-l-2 border-[#383838] bg-[#535353]">
          <div className="flex h-6 shrink-0 items-center justify-end border-b-2 border-[#383838] bg-[#424242] pr-[11px]">
            <button aria-label="Expand panels">
              <Svg w={14} h={12}>
                <path d="M-2 -4L-6 0L-2 4M6 -4L2 0L6 4" stroke={C} strokeWidth="2" />
              </Svg>
            </button>
          </div>
          {DOCK.map((group) => (
            <div key={group[0][0]} className="flex flex-col items-center border-b-2 border-[#383838] pt-[6px] pb-[6px]">
              <GripH />
              <div className="mt-1 flex flex-col">
                {group.map(([label, art]) => (
                  <button key={label} aria-label={`${label} panel`} className="flex h-14 items-center justify-center">
                    <Svg w={48} h={48}>{art}</Svg>
                  </button>
                ))}
              </div>
            </div>
          ))}
        </div>
      </div>
    </aside>
  );
}

/* ---------- page ---------- */

export default function App() {
  return (
    <div className="h-screen bg-[#eef2f2]">
      <svg width="0" height="0" className="absolute" aria-hidden="true">
        <defs>
          <linearGradient id="toolGradient">
            <stop offset="0" stopColor="#2d2d2d" />
            <stop offset="1" stopColor="#dcdcdc" />
          </linearGradient>
        </defs>
      </svg>
      <div className="flex h-full flex-col overflow-hidden rounded-t-[12px] border-2 border-[#383838] bg-[#383838] font-['Noto_Sans',sans-serif]">
        <TitleBar />
        <ControlBar />
        <div className="flex min-h-0 flex-1">
          <div className="flex min-w-0 flex-1 flex-col">
            <TabBar />
            <div className="flex min-h-0 flex-1">
              <main className="relative min-w-0 flex-1 bg-[#e4f0ef]">
                <ContextBar />
                <ToolsPanel />
                <ColorPicker />
              </main>
              <div className="flex w-8 shrink-0 flex-col items-center bg-[#4a4a4a]">
                <button aria-label="Scroll up" className="mt-[7px]">
                  <Chevron dir="up" color={DIM} size={7} />
                </button>
                <div className="flex flex-1 flex-col items-center">
                  <div className="h-[45%]" />
                  <div className="h-[50px] w-[30px] rounded-full bg-[#606060]" />
                </div>
                <button aria-label="Scroll down" className="mb-[7px]">
                  <Chevron dir="down" color={DIM} size={7} />
                </button>
              </div>
            </div>
            <StatusBar />
          </div>
          <Dock />
        </div>
      </div>
    </div>
  );
}
